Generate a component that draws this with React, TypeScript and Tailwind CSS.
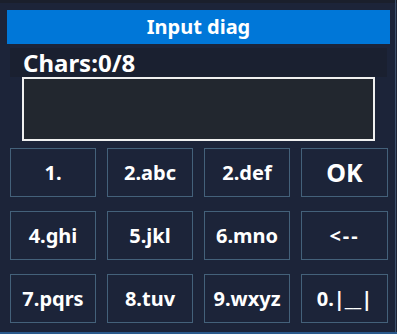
import React from 'react';

const keys = [
  '1.', '2.abc', '2.def', 'OK',
  '4.ghi', '5.jkl', '6.mno', '<--',
  '7.pqrs', '8.tuv', '9.wxyz', '0.|__|',
];

const App = () => {
  return (
    <div
      className="relative w-[397px] h-[334px] overflow-hidden bg-[#1c2439] text-white pt-[10px]"
      style={{ fontFamily: '"Noto Sans", "Liberation Sans", sans-serif' }}
    >
      {/* top strip and right edge */}
      <div className="absolute top-0 left-0 w-full h-[3px] bg-[#1a1f2c]"></div>
      <div className="absolute top-0 right-[1px] w-[1px] h-full bg-[#3b4f6a]"></div>

      {/* Title bar */}
      <div className="ml-[7px] w-[383px] h-[34px] bg-[#0077d8] flex items-center justify-center">
        <span className="text-[20px] font-bold leading-none">Input diag</span>
      </div>

      {/* Counter */}
      <div className="mx-[10px] mt-[4px] h-[29px] bg-[#1a2030] flex items-center pl-[13px]">
        <span className="text-[24px] font-bold leading-none">Chars:0/8</span>
      </div>

      {/* Input box */}
      <div className="ml-[22px] w-[353px] h-[64px] border-2 border-[#f0f0f0] bg-[#22272f]"></div>

      {/* Keypad */}
      <div className="ml-[10px] mt-[7px] grid grid-cols-[86px_86px_86px_87px] auto-rows-[49px] gap-x-[11px] gap-y-[14px]">
        {keys.map((k) => (
          <div
            key={k}
            className="border border-[#44617a] flex items-center justify-center"
          >
            <span
              className={
                k === 'OK'
                  ? 'text-[25px] font-bold leading-none'
                  : k === '<--'
                  ? 'text-[20px] font-bold leading-none tracking-[2px]'
                  : 'text-[20px] font-bold leading-none'
              }
            >
              {k}
            </span>
          </div>
        ))}
      </div>

      <div className="absolute bottom-0 left-0 w-full h-[2px] bg-[#2a5a8c]"></div>
    </div>
  );
};

export default App;
